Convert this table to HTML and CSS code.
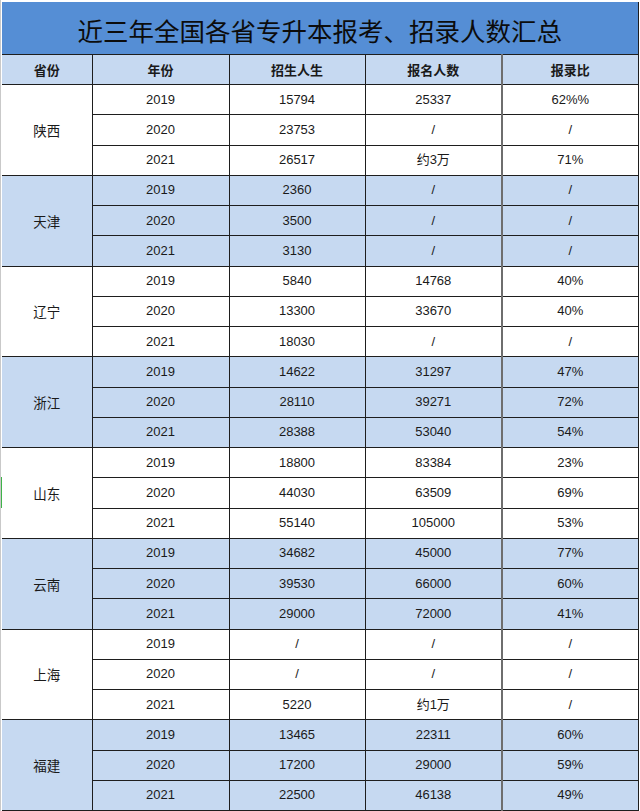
FILE: index.html
```html
<!DOCTYPE html>
<html lang="zh">
<head>
<meta charset="utf-8">
<title>近三年全国各省专升本报考、招录人数汇总</title>
<link rel="stylesheet" href="styles.css">
</head>
<body>
<div class="sheet">
  <div class="row-mark"></div>
  <table class="summary">
    <colgroup>
      <col class="c-prov"><col class="c-year"><col class="c-plan"><col class="c-apply"><col class="c-ratio">
    </colgroup>
    <thead>
      <tr class="title-row"><th colspan="5">近三年全国各省专升本报考、招录人数汇总</th></tr>
      <tr class="head-row"><th>省份</th><th>年份</th><th>招生人生</th><th>报名人数</th><th class="ratio">报录比</th></tr>
    </thead>
    <tbody class="g-white">
      <tr><td rowspan="3" class="prov">陕西</td><td>2019</td><td>15794</td><td>25337</td><td class="ratio">62%%</td></tr>
      <tr><td>2020</td><td>23753</td><td>/</td><td class="ratio">/</td></tr>
      <tr><td>2021</td><td>26517</td><td>约3万</td><td class="ratio">71%</td></tr>
    </tbody>
    <tbody class="g-blue">
      <tr><td rowspan="3" class="prov">天津</td><td>2019</td><td>2360</td><td>/</td><td class="ratio">/</td></tr>
      <tr><td>2020</td><td>3500</td><td>/</td><td class="ratio">/</td></tr>
      <tr><td>2021</td><td>3130</td><td>/</td><td class="ratio">/</td></tr>
    </tbody>
    <tbody class="g-white">
      <tr><td rowspan="3" class="prov">辽宁</td><td>2019</td><td>5840</td><td>14768</td><td class="ratio">40%</td></tr>
      <tr><td>2020</td><td>13300</td><td>33670</td><td class="ratio">40%</td></tr>
      <tr><td>2021</td><td>18030</td><td>/</td><td class="ratio">/</td></tr>
    </tbody>
    <tbody class="g-blue">
      <tr><td rowspan="3" class="prov">浙江</td><td>2019</td><td>14622</td><td>31297</td><td class="ratio">47%</td></tr>
      <tr><td>2020</td><td>28110</td><td>39271</td><td class="ratio">72%</td></tr>
      <tr><td>2021</td><td>28388</td><td>53040</td><td class="ratio">54%</td></tr>
    </tbody>
    <tbody class="g-white">
      <tr><td rowspan="3" class="prov">山东</td><td>2019</td><td>18800</td><td>83384</td><td class="ratio">23%</td></tr>
      <tr><td>2020</td><td>44030</td><td>63509</td><td class="ratio">69%</td></tr>
      <tr><td>2021</td><td>55140</td><td>105000</td><td class="ratio">53%</td></tr>
    </tbody>
    <tbody class="g-blue">
      <tr><td rowspan="3" class="prov">云南</td><td>2019</td><td>34682</td><td>45000</td><td class="ratio">77%</td></tr>
      <tr><td>2020</td><td>39530</td><td>66000</td><td class="ratio">60%</td></tr>
      <tr><td>2021</td><td>29000</td><td>72000</td><td class="ratio">41%</td></tr>
    </tbody>
    <tbody class="g-white">
      <tr><td rowspan="3" class="prov">上海</td><td>2019</td><td>/</td><td>/</td><td class="ratio">/</td></tr>
      <tr><td>2020</td><td>/</td><td>/</td><td class="ratio">/</td></tr>
      <tr><td>2021</td><td>5220</td><td>约1万</td><td class="ratio">/</td></tr>
    </tbody>
    <tbody class="g-blue">
      <tr><td rowspan="3" class="prov">福建</td><td>2019</td><td>13465</td><td>22311</td><td class="ratio">60%</td></tr>
      <tr><td>2020</td><td>17200</td><td>29000</td><td class="ratio">59%</td></tr>
      <tr><td>2021</td><td>22500</td><td>46138</td><td class="ratio">49%</td></tr>
    </tbody>
  </table>
</div>
</body>
</html>
```

FILE: styles.css
```css
html, body {
  margin: 0;
  padding: 0;
  background: #ffffff;
}

.sheet {
  position: relative;
  width: 640px;
  height: 811px;
  overflow: hidden;
  box-sizing: border-box;
  padding: 2px 0 0 1px;
  border-left: 1px solid #c9c9c9;
  background: #ffffff;
}

.row-mark {
  position: absolute;
  left: -1px;
  top: 477px;
  width: 2px;
  height: 31px;
  background: #3fb24a;
}

.summary {
  border-collapse: collapse;
  table-layout: fixed;
  width: 636px;
  font-family: "Liberation Sans", "Noto Sans CJK SC", sans-serif;
  font-size: 13px;
  color: #1a1a1a;
}

.c-prov { width: 90px; }
.c-year { width: 137px; }
.c-plan { width: 136px; }
.c-apply { width: 137px; }
.c-ratio { width: 136px; }

.summary th,
.summary td {
  border: 1px solid #1e1e1e;
  text-align: center;
  vertical-align: middle;
  padding: 0;
  line-height: 16px;
}

.summary td.ratio,
.summary th.ratio {
  border-left: 2px solid #6e6e6e;
}

.title-row th {
  height: 49px;
  background: #558ed5;
  border-top: none;
  border-left: none;
  font-family: "Noto Sans CJK SC", sans-serif;
  font-size: 25.5px;
  font-weight: 400;
  color: #0c0c0c;
  padding-top: 3px;
  line-height: 30px;
}

.head-row th {
  height: 29px;
  background: #c6d9f1;
  font-family: "Noto Sans CJK SC", sans-serif;
  font-size: 13px;
  font-weight: 700;
}

.head-row th:first-child,
.summary td.prov {
  border-left: none;
}

.summary tbody tr {
  height: 30.25px;
}

.summary td.prov {
  font-family: "Noto Sans CJK SC", sans-serif;
  font-size: 13.5px;
}

.g-white td {
  background: #ffffff;
}

.g-blue td {
  background: #c6d9f1;
}
```
